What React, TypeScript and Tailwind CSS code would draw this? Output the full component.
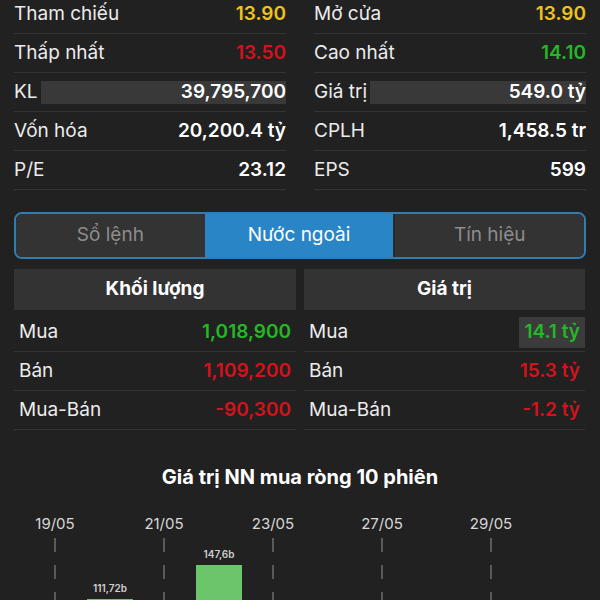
import React from "react";

const stats = [
  [
    { label: "Tham chiếu", value: "13.90", color: "text-[#eec31c]" },
    { label: "Mở cửa", value: "13.90", color: "text-[#eec31c]" },
  ],
  [
    { label: "Thấp nhất", value: "13.50", color: "text-[#d5121b]" },
    { label: "Cao nhất", value: "14.10", color: "text-[#25b826]" },
  ],
  [
    { label: "KL", value: "39,795,700", color: "text-white", bar: true },
    { label: "Giá trị", value: "549.0 tỷ", color: "text-white", bar: true },
  ],
  [
    { label: "Vốn hóa", value: "20,200.4 tỷ", color: "text-white" },
    { label: "CPLH", value: "1,458.5 tr", color: "text-white" },
  ],
  [
    { label: "P/E", value: "23.12", color: "text-white" },
    { label: "EPS", value: "599", color: "text-white" },
  ],
];

const StatCell = ({ s }: { s: any }) => (
  <div className="flex h-[39px] items-center border-b border-[#343434]">
    <span className="text-[19px] text-[#ececec] pr-[3px]">{s.label}</span>
    {s.bar ? (
      <div className="flex-1 h-[23px] bg-[#393939] flex items-center justify-end">
        <span className={`text-[19px] font-semibold ${s.color}`}>{s.value}</span>
      </div>
    ) : (
      <span className={`ml-auto text-[19px] font-semibold ${s.color}`}>{s.value}</span>
    )}
  </div>
);

const TableRow = ({
  label,
  value,
  color,
  boxed,
  first,
}: {
  label: string;
  value: string;
  color: string;
  boxed?: boolean;
  first?: boolean;
}) => (
  <div
    className={`flex items-center border-b border-[#343434] pl-[5px] ${
      first ? "h-[42px] pt-[4px]" : "h-[39px]"
    }`}
  >
    <span className="text-[19px] text-[#ececec]">{label}</span>
    {boxed ? (
      <span
        className={`ml-auto h-[31px] px-[5px] flex items-center bg-[#3b3b3b] text-[19px] font-semibold ${color}`}
      >
        {value}
      </span>
    ) : (
      <span className={`ml-auto pr-[5px] text-[19px] font-semibold ${color}`}>{value}</span>
    )}
  </div>
);

const dates = ["19/05", "21/05", "23/05", "27/05", "29/05"];

const DashLine = () => (
  <div className="flex flex-col gap-[13px] items-center">
    {Array.from({ length: 4 }).map((_, i) => (
      <div key={i} className="w-[2px] h-[14px] bg-[#5a5a5a]" />
    ))}
  </div>
);

export default function App() {
  return (
    <div
      className="w-[600px] h-[600px] overflow-hidden bg-[#212121] px-[14px]"
      style={{ fontFamily: "Inter, 'Noto Sans', sans-serif" }}
    >
      <div className="grid grid-cols-2 gap-x-[28px] mt-[-5px]">
        {stats.map((row, i) => (
          <React.Fragment key={i}>
            <StatCell s={row[0]} />
            <StatCell s={row[1]} />
          </React.Fragment>
        ))}
      </div>

      <div className="mt-[22px] h-[47px] rounded-[8px] border-2 border-[#2f7eb3] flex overflow-hidden">
        <div className="flex-1 bg-[#333333] flex items-center justify-center text-[19px] text-[#8d8d8d]">
          Sổ lệnh
        </div>
        <div className="flex-1 bg-[#2a85c6] flex items-center justify-center text-[19px] text-white">
          Nước ngoài
        </div>
        <div className="flex-1 bg-[#333333] flex items-center justify-center text-[19px] text-[#8d8d8d] border-l-2 border-[#2b2b2b]">
          Tín hiệu
        </div>
      </div>

      <div className="mt-[10px] grid grid-cols-[282px_281px] gap-x-[8px]">
        <div>
          <div className="h-[41px] bg-[#333333] flex items-center justify-center text-[19px] font-bold text-white">
            Khối lượng
          </div>
          <TableRow label="Mua" value="1,018,900" color="text-[#25b826]" first />
          <TableRow label="Bán" value="1,109,200" color="text-[#d5121b]" />
          <TableRow label="Mua-Bán" value="-90,300" color="text-[#d5121b]" />
        </div>
        <div>
          <div className="h-[41px] bg-[#333333] flex items-center justify-center text-[19px] font-bold text-white">
            Giá trị
          </div>
          <TableRow label="Mua" value="14.1 tỷ" color="text-[#25b826]" boxed first />
          <TableRow label="Bán" value="15.3 tỷ" color="text-[#d5121b]" />
          <TableRow label="Mua-Bán" value="-1.2 tỷ" color="text-[#d5121b]" />
        </div>
      </div>

      <div className="mt-[32px] h-[30px] leading-[30px] text-center text-[20px] font-bold text-white">
        Giá trị NN mua ròng 10 phiên
      </div>

      <div className="mt-[22px] flex ml-[21px]">
        {dates.map((d, i) => (
          <div key={d} className="w-[109px] flex">
            <div className="w-[40px] flex flex-col items-center">
              <span className="text-[15px] text-[#d8d8d8] leading-[20px]">{d}</span>
              <div className="mt-[4px]">
                <DashLine />
              </div>
            </div>
            {i === 0 && (
              <div className="ml-[12px] w-[46px] flex flex-col items-center pt-[68px]">
                <span className="text-[10px] font-semibold text-[#cfcfcf] leading-[12px]">111,72b</span>
                <div className="mt-[5px] w-[46px] h-[40px] bg-[#6cc56a]" />
              </div>
            )}
            {i === 1 && (
              <div className="ml-[12px] w-[46px] flex flex-col items-center pt-[34px]">
                <span className="text-[10px] font-semibold text-[#cfcfcf] leading-[12px]">147,6b</span>
                <div className="mt-[5px] w-[46px] h-[60px] bg-[#6cc56a]" />
              </div>
            )}
          </div>
        ))}
      </div>
    </div>
  );
}
